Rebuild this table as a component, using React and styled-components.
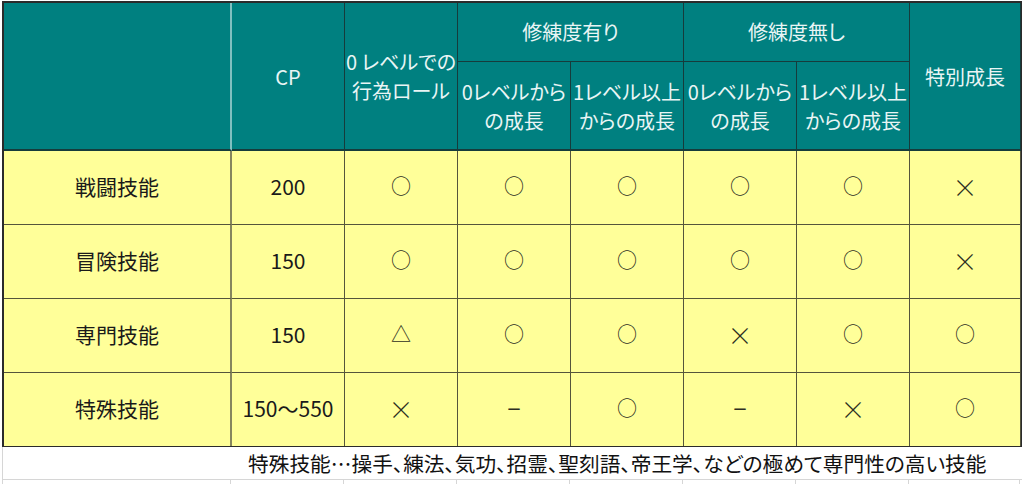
import React from "react";
import styled, { createGlobalStyle } from "styled-components";

const GlobalStyle = createGlobalStyle`
  html, body { margin: 0; padding: 0; background: #ffffff; }
  body {
    font-family: "Noto Sans CJK JP", "Noto Sans", sans-serif;
    width: 1024px;
    height: 484px;
    overflow: hidden;
  }
`;

const COLS = "228px 113px 113px 113px 113px 113px 113px 111px";

const Page = styled.div`
  padding: 1px 0 0 2px;
`;

const Sheet = styled.div`
  display: grid;
  grid-template-columns: ${COLS};
  grid-template-rows: 59px 89px 74px 74px 74px 73px;
  width: max-content;
  border-top: 2px solid #2b2b2b;
  border-left: 2px solid #2b2b2b;
  border-right: 1px solid #2b2b2b;
  border-bottom: 1px solid #2b2b2b;
`;

const HeadCell = styled.div`
  box-sizing: border-box;
  grid-column: ${(p) => p.$col};
  grid-row: ${(p) => p.$row};
  background: #008080;
  color: #e9f5f5;
  font-size: 20px;
  line-height: 29px;
  text-align: center;
  white-space: nowrap;
  font-feature-settings: "palt";
  display: flex;
  align-items: center;
  justify-content: center;
  border-right: ${(p) => (p.$light ? "2px solid #80c0c0" : "1px solid #163c3c")};
  border-bottom: ${(p) => (p.$thick ? "2px" : "1px")} solid #163c3c;
  padding-bottom: ${(p) => p.$pb || 0}px;
`;

const BodyCell = styled.div`
  box-sizing: border-box;
  background: #ffff99;
  color: #1a1a1a;
  font-size: 21px;
  display: flex;
  align-items: center;
  justify-content: center;
  padding-bottom: 3px;
  border-right: ${(p) => (p.$first ? "2px solid #86865e" : "1px solid #55553c")};
  border-bottom: ${(p) => (p.$last ? "0" : "1px solid #55553c")};
`;

const Mark = styled.span`
  font-size: ${(p) => p.$size}px;
  font-weight: ${(p) => p.$weight};
  color: #2e2e22;
  line-height: 1;
`;

const MARK_STYLE = {
  "○": { size: 20, weight: 400 },
  "△": { size: 20, weight: 400 },
  "×": { size: 25, weight: 300 },
  "－": { size: 16, weight: 700 },
};

const FooterRow = styled.div`
  box-sizing: border-box;
  height: 33px;
  width: 1020px;
  border-left: 1px solid #d6d6d6;
  border-bottom: 1px solid #d6d6d6;
  display: flex;
  align-items: center;
  padding-left: 245px;
  font-size: 20.7px;
  color: #111;
  font-feature-settings: "palt";
  white-space: nowrap;
`;

const GridLines = styled.div`
  display: grid;
  grid-template-columns: ${COLS};
  height: 10px;
  border-left: 1px solid #d6d6d6;
  width: max-content;
`;

const GridLine = styled.div`
  border-right: 1px solid #d6d6d6;
`;

const rows = [
  ["戦闘技能", "200", ["○", "○", "○", "○", "○", "×"]],
  ["冒険技能", "150", ["○", "○", "○", "○", "○", "×"]],
  ["専門技能", "150", ["△", "○", "○", "×", "○", "○"]],
  ["特殊技能", "150～550", ["×", "－", "○", "－", "×", "○"]],
];

export default function App() {
  return (
    <>
      <GlobalStyle />
      <Page>
        <Sheet>
          <HeadCell $col="1" $row="1 / span 2" $light $thick />
          <HeadCell $col="2" $row="1 / span 2" $thick>CP</HeadCell>
          <HeadCell $col="3" $row="1 / span 2" $thick>
            0 レベルでの
            <br />
            行為ロール
          </HeadCell>
          <HeadCell $col="4 / span 2" $row="1" $pb={2}>修練度有り</HeadCell>
          <HeadCell $col="6 / span 2" $row="1" $pb={2}>修練度無し</HeadCell>
          <HeadCell $col="8" $row="1 / span 2" $thick>特別成長</HeadCell>
          <HeadCell $col="4" $row="2" $thick>
            0レベルから
            <br />
            の成長
          </HeadCell>
          <HeadCell $col="5" $row="2" $thick>
            1レベル以上
            <br />
            からの成長
          </HeadCell>
          <HeadCell $col="6" $row="2" $thick>
            0レベルから
            <br />
            の成長
          </HeadCell>
          <HeadCell $col="7" $row="2" $thick>
            1レベル以上
            <br />
            からの成長
          </HeadCell>
          {rows.map(([name, cp, marks], i) => {
            const last = i === rows.length - 1;
            return (
              <React.Fragment key={name}>
                <BodyCell $first $last={last}>{name}</BodyCell>
                <BodyCell $last={last}>{cp}</BodyCell>
                {marks.map((m, j) => (
                  <BodyCell key={j} $last={last}>
                    <Mark $size={MARK_STYLE[m].size} $weight={MARK_STYLE[m].weight}>
                      {m}
                    </Mark>
                  </BodyCell>
                ))}
              </React.Fragment>
            );
          })}
        </Sheet>
        <FooterRow>
          特殊技能…操手、練法、気功、招霊、聖刻語、帝王学、などの極めて専門性の高い技能
        </FooterRow>
        <GridLines>
          {Array.from({ length: 8 }).map((_, i) => (
            <GridLine key={i} />
          ))}
        </GridLines>
      </Page>
    </>
  );
}
